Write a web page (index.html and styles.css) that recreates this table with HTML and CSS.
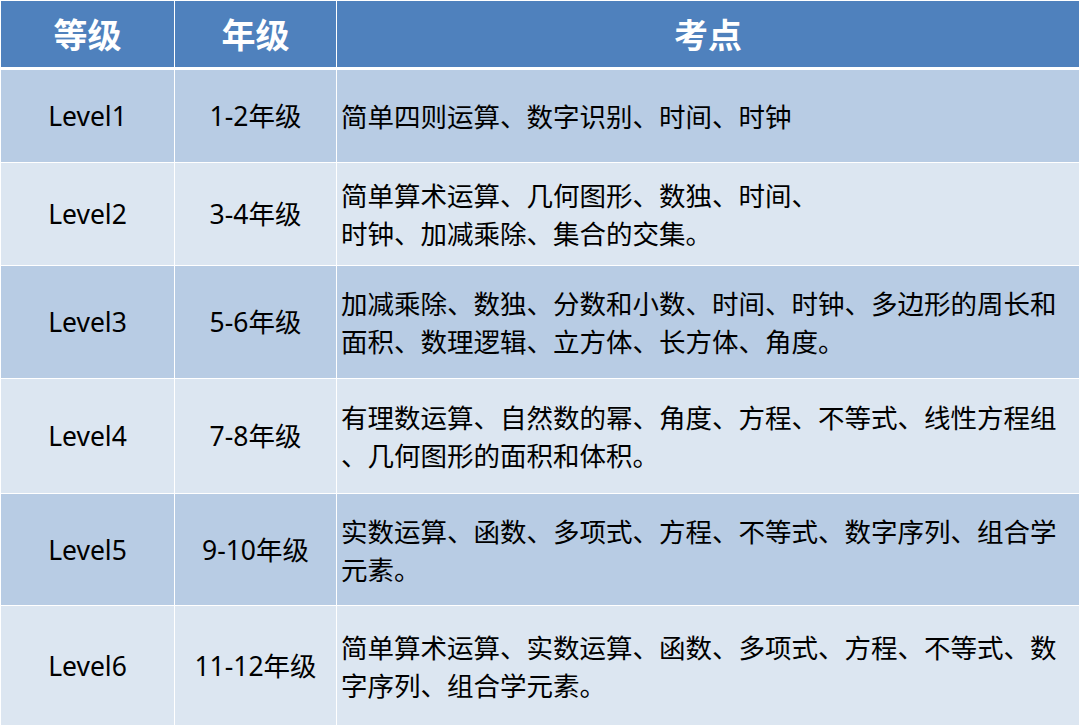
FILE: index.html
```html
<!DOCTYPE html>
<html lang="zh-CN">
<head>
<meta charset="utf-8">
<link rel="stylesheet" href="styles.css">
</head>
<body>
<div class="table">
  <div class="row head">
    <div class="cell">等级</div>
    <div class="cell">年级</div>
    <div class="cell">考点</div>
  </div>
  <div class="row odd r1">
    <div class="cell">Level1</div>
    <div class="cell">1-2年级</div>
    <div class="cell topic">简单四则运算、数字识别、时间、时钟</div>
  </div>
  <div class="row even r2">
    <div class="cell">Level2</div>
    <div class="cell">3-4年级</div>
    <div class="cell topic">简单算术运算、几何图形、数独、时间、<br>时钟、加减乘除、集合的交集。</div>
  </div>
  <div class="row odd r3">
    <div class="cell">Level3</div>
    <div class="cell">5-6年级</div>
    <div class="cell topic">加减乘除、数独、分数和小数、时间、时钟、多边形的周长和<br>面积、数理逻辑、立方体、长方体、角度。</div>
  </div>
  <div class="row even r4">
    <div class="cell">Level4</div>
    <div class="cell">7-8年级</div>
    <div class="cell topic">有理数运算、自然数的幂、角度、方程、不等式、线性方程组<br>、几何图形的面积和体积。</div>
  </div>
  <div class="row odd r5">
    <div class="cell">Level5</div>
    <div class="cell">9-10年级</div>
    <div class="cell topic">实数运算、函数、多项式、方程、不等式、数字序列、组合学<br>元素。</div>
  </div>
  <div class="row even r6">
    <div class="cell">Level6</div>
    <div class="cell">11-12年级</div>
    <div class="cell topic">简单算术运算、实数运算、函数、多项式、方程、不等式、数<br>字序列、组合学元素。</div>
  </div>
</div>
</body>
</html>
```
FILE: styles.css
```css
html, body {
  margin: 0;
  padding: 0;
  background: #ffffff;
}
body {
  font-family: "Noto Sans", "Noto Sans CJK SC", sans-serif;
  color: #000000;
}
.table {
  margin: 1px 1px 0 1px;
  width: 1078px;
  display: flex;
  flex-direction: column;
  gap: 1px;
}
.row {
  display: grid;
  grid-template-columns: 173px 161px 1fr;
  column-gap: 1px;
}
.cell {
  display: flex;
  align-items: center;
  justify-content: center;
  font-size: 26.5px;
  line-height: 38px;
  white-space: nowrap;
}
.topic {
  justify-content: flex-start;
  padding-left: 4px;
  font-family: "Noto Sans CJK SC", sans-serif;
  font-size: 26.5px;
}
.head {
  height: 66px;
  margin-bottom: 2px;
}
.head .cell {
  background: #4f81bd;
  color: #ffffff;
  font-weight: bold;
  font-size: 34px;
  font-family: "Noto Sans CJK SC", sans-serif;
}
.odd .cell { background: #b8cce4; }
.even .cell { background: #dce6f1; }
.r1 { height: 92px; }
.r2 { height: 102px; }
.r3 { height: 112px; }
.r4 { height: 114px; }
.r5 { height: 111px; }
.r6 { height: 119px; }
```
